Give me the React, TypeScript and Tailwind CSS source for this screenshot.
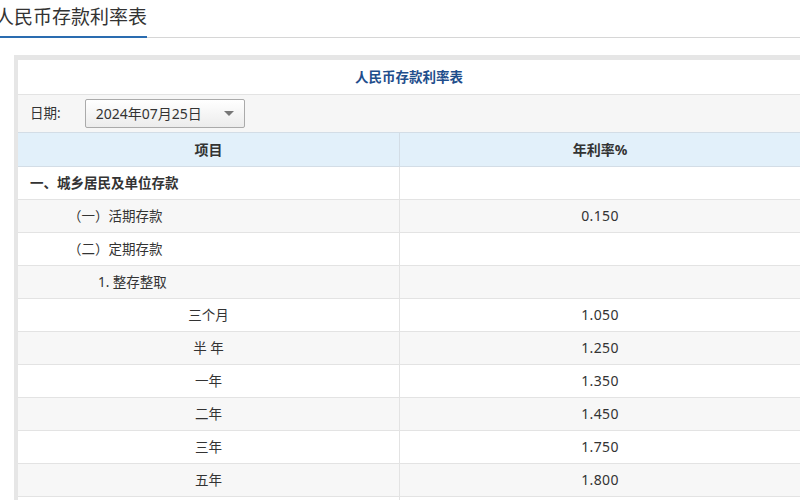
const rows: { label: string; rate: string; indent: string; bold?: boolean }[] = [
  { label: '一、城乡居民及单位存款', rate: '', indent: 'pl-[12px] text-left', bold: true },
  { label: '（一）活期存款', rate: '0.150', indent: 'pl-[50px] text-left' },
  { label: '（二）定期存款', rate: '', indent: 'pl-[50px] text-left' },
  { label: '1. 整存整取', rate: '', indent: 'pl-[80px] text-left' },
  { label: '三个月', rate: '1.050', indent: 'text-center' },
  { label: '半 年', rate: '1.250', indent: 'text-center' },
  { label: '一年', rate: '1.350', indent: 'text-center' },
  { label: '二年', rate: '1.450', indent: 'text-center' },
  { label: '三年', rate: '1.750', indent: 'text-center' },
  { label: '五年', rate: '1.800', indent: 'text-center' },
  { label: '', rate: '', indent: 'text-center' },
];

export default function App() {
  return (
    <div
      className="w-[800px] h-[500px] overflow-hidden bg-white text-[#333]"
      style={{ fontFamily: '"Noto Sans", "Noto Sans CJK SC", sans-serif' }}
    >
      {/* Tab header */}
      <div className="flex h-[38px] border-b border-[#d6d6d6]">
        <div className="w-[147px] border-b-2 border-[#2a6cb0] -mb-px text-[19px] leading-[34px] text-[#333] whitespace-nowrap overflow-hidden">
          <span className="-ml-[5px] inline-block">人民币存款利率表</span>
        </div>
      </div>

      <div className="pt-[17px] pl-[14px]">
        <div className="bg-[#e6e6e6] pl-[4px] pt-[5px]">
          <div className="bg-white text-[13.5px]">
            <div className="h-[35px] border-b border-[#e3e3e3] flex items-center justify-center font-bold text-[#1f4e8c]">
              人民币存款利率表
            </div>
            <div className="h-[37px] bg-[#f6f6f6] flex items-center pl-[12px] gap-[24px]">
              <span>日期:</span>
              <div className="w-[160px] h-[29px] border border-[#aaa] rounded-[2px] bg-gradient-to-b from-white to-[#ececec] flex items-center justify-between px-[10px] text-[14px]">
                <span>2024年07月25日</span>
                <span className="w-0 h-0 border-l-[5px] border-r-[5px] border-t-[5px] border-l-transparent border-r-transparent border-t-[#777]" />
              </div>
            </div>
            <div className="grid grid-cols-[382px_1fr] h-[35px] bg-[#e2f0fa] border-y border-[#d3dde6] font-bold text-[14px]">
              <div className="flex items-center justify-center border-r border-[#d3dde6]">项目</div>
              <div className="flex items-center justify-center">年利率%</div>
            </div>
            {rows.map((r, i) => (
              <div
                key={i}
                className={`grid grid-cols-[382px_1fr] h-[33px] border-b border-[#e3e3e3] ${i % 2 === 1 ? 'bg-[#f7f7f7]' : 'bg-white'}`}
              >
                <div className={`leading-[32px] border-r border-[#e3e3e3] ${r.indent} ${r.bold ? 'font-bold' : ''}`}>
                  {r.label}
                </div>
                <div className="leading-[32px] text-center text-[14px] tracking-wide">{r.rate}</div>
              </div>
            ))}
          </div>
        </div>
      </div>
    </div>
  );
}
